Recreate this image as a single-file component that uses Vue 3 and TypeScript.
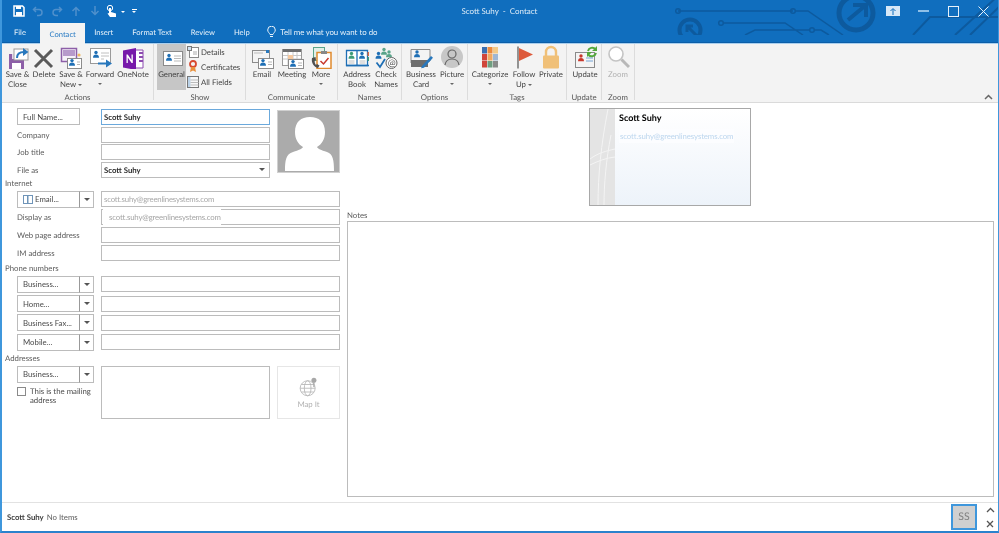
<script setup lang="ts">
interface RibbonBtn {
  lines: string[]
  width: number
  icon: string
  caret?: boolean
  disabled?: boolean
  active?: boolean
}

interface RibbonGroup {
  label: string
  width: number
  items: RibbonBtn[]
  list?: { label: string; icon: string }[]
}

// small reusable pieces for the ribbon icons
const person = (x: number, y: number, c = '#1f6fb5') =>
  `<circle cx="${x}" cy="${y}" r="1.7" fill="${c}"/><path d="M${x - 3} ${y + 5.2}c0-2.4 1.2-3.3 3-3.3s3 .9 3 3.3z" fill="${c}"/>`

const card = (x: number, y: number, w: number, h: number) =>
  `<rect x="${x + .5}" y="${y + .5}" width="${w}" height="${h}" fill="#fff" stroke="#8c8c8c"/>` +
  person(x + 5, y + 2.6) +
  `<path d="M${x + 10} ${y + 4}h${w - 11}M${x + 10} ${y + 6.5}h${w - 11}" stroke="#b5b5b5"/>`

const icons: Record<string, string> = {
  saveClose: `<rect x="3" y="9" width="15" height="15" fill="#8d5fa8"/><rect x="6" y="9" width="9" height="5" fill="#e4d8ec"/><rect x="6" y="18" width="9" height="6" fill="#fff"/><rect x="8" y="4" width="14" height="11" fill="#fff" stroke="#9c9c9c"/><path d="M11 13c0-4 3-6 7-6" fill="none" stroke="#2878bd" stroke-width="2"/><path d="M17 3l5.500 4-5.500 4z" fill="#2878bd"/>`,
  delete: `<path d="M3 5 20 22M20 5 3 22" stroke="#5a5a5a" stroke-width="3" fill="none"/>`,
  saveNew: `<rect x="2.500" y="3.500" width="15" height="13" fill="#f6f1f9" stroke="#8d5fa8" stroke-width="1.500"/><rect x="4" y="5" width="12" height="6" fill="#b79acb"/>${card(8, 13, 14, 10)}<circle cx="20" cy="10" r="1.600" fill="#f0b860"/>`,
  forward: `<rect x="2.500" y="3.500" width="20" height="15" fill="#fff" stroke="#9a9a9a"/>${person(8, 7.5)}<path d="M13 8h8M13 11h8M13 14h3" stroke="#c0c0c0"/><path d="M10 18.500h10" stroke="#2878bd" stroke-width="2"/><path d="M18 14.500l6 4-6 4z" fill="#2878bd"/>`,
  onenote: `<path d="M10 5h12v18H10z" fill="#fff" stroke="#8c4ab0"/><path d="M18 8h4M18 12h4M18 16h4" stroke="#8c4ab0" stroke-width="2"/><path d="M2 5.500 15 3v22L2 22.500z" fill="#7719aa"/><path d="M5.500 18V9.500h1.200L10.500 15V9.500h1.300V18h-1.200L6.800 12.500V18z" fill="#fff"/>`,
  general: `<rect x="3.500" y="6.500" width="19" height="14" fill="#fff" stroke="#8a8a8a"/>${person(9, 10.5)}<path d="M14 11h7M14 13.500h7M14 16h7" stroke="#bbb"/>`,
  email: `<rect x="2.500" y="5.500" width="17" height="12" fill="#f4f4f4" stroke="#8c8c8c"/><path d="M4 8h9" stroke="#bbb"/><rect x="16" y="5" width="3" height="3" fill="#2878bd"/>${card(8, 13, 15, 10)}`,
  meeting: `<rect x="2.500" y="4.500" width="19" height="16" fill="#fff" stroke="#9a9a9a"/><rect x="3" y="4" width="18" height="3" fill="#6e6e6e"/><path d="M3 10.500h18M3 14h18M8 7v13M13 7v13M17 7v13" stroke="#c8c8c8"/><rect x="8" y="10" width="5" height="4" fill="#f5c9a0"/>${card(8, 14, 15, 9)}`,
  more: `<rect x="4.500" y="2.500" width="11" height="13" fill="#e2efe8" stroke="#5aa48a"/><rect x="8" y="7.500" width="14" height="16" fill="#fff" stroke="#e08a2e" stroke-width="1.500"/><rect x="12" y="6" width="6" height="3" fill="#888"/><path d="M11.500 16l3 3 5-6" fill="none" stroke="#c8382c" stroke-width="1.500"/><path d="M3 13c-1 5 2 9 6 10l1.500-2.500-2.500-1.500-1 1c-1-1-1.500-3-1.300-4.500l1.300-.3L6.500 12z" fill="#505050"/>`,
  book: `<path d="M1.500 5.500h10.500v15H1.500zM12 5.500h10.500v15H12z" fill="#fff" stroke="#1f6fb5" stroke-width="1.300"/><path d="M1 20.500h23" stroke="#1f6fb5" stroke-width="1.500"/>${person(6.5, 8.5, '#3f9c78')}${person(17, 8.5, '#1f6fb5')}<path d="M3.500 16h6M14.500 16h6M3.500 18h6M14.500 18h6" stroke="#c0c0c0"/><rect x="22.500" y="7" width="1.500" height="4" fill="#d86a4a"/><rect x="22.500" y="12" width="1.500" height="4" fill="#3f9c78"/>`,
  names: `${person(10, 4.5, '#5aa48a')}${person(4.5, 8.5, '#1f6fb5')}${person(15, 7, '#5aa48a')}<path d="M2.500 17.500l3.500 4.500 5-8" fill="none" stroke="#1f6fb5" stroke-width="1.800"/><circle cx="17.500" cy="18" r="5.500" fill="#fff" stroke="#666"/><text x="13.800" y="21" font-size="9.500" font-family="Lato" fill="#555">@</text>`,
  bizcard: `<path d="M2 18V4.500h19V16z" fill="#f4f4f4" stroke="#8a8a8a"/>${person(8, 7, '#1f6fb5')}<path d="M2 15h17v7H2z" fill="#6e6e6e"/><path d="M13 21l9-10 2 1.700-9 10-3 .6z" fill="#2878bd"/>`,
  picture: `<circle cx="12" cy="12" r="11" fill="#c7c7c7"/><circle cx="12" cy="9" r="4" fill="none" stroke="#666" stroke-width="1.200"/><path d="M5 20c.6-4 3-6 7-6s6.400 2 7 6" fill="none" stroke="#666" stroke-width="1.200"/>`,
  categorize: `<rect x="4" y="2" width="5" height="6.500" fill="#3a6fb0"/><rect x="9.500" y="2" width="5" height="6.500" fill="#ec8a3c"/><rect x="15" y="2" width="5" height="6.500" fill="#f3c987"/><rect x="4" y="9" width="5" height="6.500" fill="#d0453a"/><rect x="9.500" y="9" width="5" height="6.500" fill="#f0a860"/><rect x="15" y="9" width="5" height="6.500" fill="#9fb7d4"/><rect x="4" y="16" width="5" height="6.500" fill="#d0453a"/><rect x="9.500" y="16" width="5" height="6.500" fill="#6f9e80"/><rect x="15" y="16" width="5" height="6.500" fill="#8a8a8a"/>`,
  flag: `<path d="M6 1.500v22" stroke="#7a7a7a" stroke-width="1.600"/><path d="M7 3l14 6.500L7 16z" fill="#dd5a3c"/>`,
  lock: `<path d="M7 11V7a5 5 0 0 1 10 0v4" fill="none" stroke="#f0c078" stroke-width="2.400"/><rect x="4" y="10.500" width="16" height="13" rx="1" fill="#f0c078"/>`,
  update: `<rect x="2.500" y="7.500" width="19" height="15" fill="#f4f4f4" stroke="#8a8a8a"/>${person(8, 11, '#c8382c')}<path d="M13 13h7M13 16h7" stroke="#9fbfdf" stroke-width="1.500"/><path d="M15 6a4.500 4.500 0 0 1 7.500-2M23 8a4.500 4.500 0 0 1-7.500 2" fill="none" stroke="#54a83c" stroke-width="2"/><path d="M24 1v5h-5zM14 12V7h5z" fill="#54a83c"/>`,
  zoom: `<circle cx="10" cy="9" r="7" fill="#fff" stroke="#c4c4c4" stroke-width="1.600"/><path d="M15.500 14.500 23 22" stroke="#b8b8b8" stroke-width="3"/>`,
}

const groups: RibbonGroup[] = [
  {
    label: 'Actions', width: 152, items: [
      { lines: ['Save &', 'Close'], width: 27, icon: 'saveClose' },
      { lines: ['Delete'], width: 26, icon: 'delete' },
      { lines: ['Save &', 'New'], width: 28, icon: 'saveNew', caret: true },
      { lines: ['Forward'], width: 30, icon: 'forward', caret: true },
      { lines: ['OneNote'], width: 36, icon: 'onenote' },
    ],
  },
  {
    label: 'Show', width: 92, items: [{ lines: ['General'], width: 29, icon: 'general', active: true }],
    list: [
      { label: 'Details', icon: 'details' },
      { label: 'Certificates', icon: 'cert' },
      { label: 'All Fields', icon: 'fields' },
    ],
  },
  {
    label: 'Communicate', width: 92, items: [
      { lines: ['Email'], width: 28, icon: 'email' },
      { lines: ['Meeting'], width: 32, icon: 'meeting' },
      { lines: ['More'], width: 26, icon: 'more', caret: true },
    ],
  },
  {
    label: 'Names', width: 64, items: [
      { lines: ['Address', 'Book'], width: 34, icon: 'book' },
      { lines: ['Check', 'Names'], width: 24, icon: 'names' },
    ],
  },
  {
    label: 'Options', width: 66, items: [
      { lines: ['Business', 'Card'], width: 34, icon: 'bizcard' },
      { lines: ['Picture'], width: 28, icon: 'picture', caret: true },
    ],
  },
  {
    label: 'Tags', width: 99, items: [
      { lines: ['Categorize'], width: 40, icon: 'categorize', caret: true },
      { lines: ['Follow', 'Up'], width: 28, icon: 'flag', caret: true },
      { lines: ['Private'], width: 26, icon: 'lock' },
    ],
  },
  { label: 'Update', width: 35, items: [{ lines: ['Update'], width: 32, icon: 'update' }] },
  { label: 'Zoom', width: 33, items: [{ lines: ['Zoom'], width: 28, icon: 'zoom', disabled: true }] },
]

const tabs = ['File', 'Contact', 'Insert', 'Format Text', 'Review', 'Help']
const topRows = ['Company', 'Job title']
const webRows = ['Web page address', 'IM address']
const phones = ['Business...', 'Home...', 'Business Fax...', 'Mobile...']
const email = 'scott.suhy@greenlinesystems.com'
</script>

<template>
  <div class="win">
    <div class="head">
      <svg class="circuit" width="324" height="35" viewBox="675 0 324 35" fill="none" stroke="#0d5a9e">
        <path d="M678 11h115M796 11h12l35 24" stroke-width="1.500" />
        <circle cx="678" cy="11" r="2.300" stroke-width="1.500" />
        <circle cx="793" cy="11" r="2.300" stroke-width="1.500" />
        <path d="M724 23h61l18 12M745 35l10-5h55M815 30h6l8 5" stroke-width="1.500" />
        <circle cx="721" cy="23" r="2.300" stroke-width="1.500" />
        <circle cx="812" cy="30" r="2.300" stroke-width="1.500" />
        <circle cx="690" cy="30" r="10.500" stroke-width="4" />
        <path d="M693 26h-6v6M687 26l10 10" stroke-width="3" />
        <circle cx="856" cy="13" r="17" stroke-width="5" />
        <path d="M853 5h13v12M866 5l-18 15" stroke-width="4" />
        <path d="M913 35l17-18h69M955 35l44-40M970 35l29-28" stroke-width="2" />
      </svg>
      <header class="titlebar">
        <div class="qat">
          <svg class="qat-i" width="12" height="12" viewBox="0 0 12 12"><path d="M1 1h8.500L11 2.500V11H1z" fill="none" stroke="#fff" stroke-width="1.500" /><path d="M3 1h5v3H3zM3 7h6v4H3z" fill="#fff" /></svg>
          <svg class="qat-i" width="12" height="12" viewBox="0 0 12 12" fill="none" stroke="#4f90cc" stroke-width="1.500"><path d="M4 2 1.500 4.500 4 7M2 4.500h5a3 3 0 0 1 0 6H5" /></svg>
          <svg class="qat-i" width="12" height="12" viewBox="0 0 12 12" fill="none" stroke="#4f90cc" stroke-width="1.500"><path d="M8 2l2.500 2.500L8 7M10 4.500H5a3 3 0 0 0 0 6h2" /></svg>
          <svg class="qat-i" width="12" height="12" viewBox="0 0 12 12" fill="none" stroke="#4f90cc" stroke-width="1.500"><path d="M2.500 6 6 2.500 9.500 6M6 3v8" /></svg>
          <svg class="qat-i" width="12" height="12" viewBox="0 0 12 12" fill="none" stroke="#4f90cc" stroke-width="1.500"><path d="M2.500 6 6 9.500 9.500 6M6 9V1" /></svg>
          <svg class="qat-i hand" width="12" height="13" viewBox="0 0 12 13"><circle cx="4" cy="3" r="2.700" fill="none" stroke="#fff" /><path d="M3 3h2v4l5 1.500V12H4L1.500 8.500 3 8z" fill="#fff" /></svg>
          <span class="qat-caret"></span>
          <span class="qat-more"></span>
        </div>
        <div class="wintitle">Scott Suhy&nbsp; -&nbsp; Contact</div>
        <div class="controls">
          <span class="ctl"><svg width="14" height="10" viewBox="0 0 14 10"><rect width="14" height="10" fill="#d7e8f7" /><path d="M7 9V3M4.500 5 7 2.500 9.500 5" stroke="#106ebe" fill="none" /></svg></span>
          <span class="ctl"><svg width="11" height="2" viewBox="0 0 11 2"><rect width="11" height="2" fill="#8fc0e8" /></svg></span>
          <span class="ctl"><svg width="11" height="11" viewBox="0 0 11 11"><rect x=".5" y=".5" width="10" height="10" fill="none" stroke="#e6f1fa" /></svg></span>
          <span class="ctl"><svg width="11" height="11" viewBox="0 0 11 11"><path d="M.5.500l10 10M10.500.500l-10 10" stroke="#e6f1fa" /></svg></span>
        </div>
      </header>

      <nav class="tabs">
        <span v-for="t in tabs" :key="t" class="tab" :class="{ on: t === 'Contact' }">{{ t }}</span>
        <span class="tell">
          <svg width="9" height="12" viewBox="0 0 9 12" fill="none" stroke="#e6f1fa"><path d="M3 8.500C2.500 7 .7 6 .7 4a3.800 3.800 0 0 1 7.600 0c0 2-1.800 3-2.300 4.500zM3 10.500h3" /></svg>
          Tell me what you want to do
        </span>
      </nav>
    </div>

    <section class="ribbon">
      <div v-for="g in groups" :key="g.label" class="group" :style="{ width: g.width + 'px' }">
        <div class="group-main">
          <div
            v-for="b in g.items"
            :key="b.icon"
            class="big"
            :class="{ active: b.active, off: b.disabled }"
            :style="{ width: b.width + 'px' }"
          >
            <svg class="big-icon" width="24" height="24" viewBox="0 0 24 24" v-html="icons[b.icon]"></svg>
            <span v-for="l in b.lines" :key="l" class="big-line">{{ l }}<i v-if="b.caret && b.lines.length > 1 && l === b.lines[1]" class="mini"></i></span>
            <i v-if="b.caret && b.lines.length === 1" class="mini alone"></i>
          </div>
          <ul v-if="g.list" class="show-list">
            <li>
              <svg width="12" height="12" viewBox="0 0 12 12"><rect x="2.500" y="1.500" width="9" height="10" fill="#fff" stroke="#888" /><rect x=".5" y=".5" width="4" height="4" fill="#cfe0f0" stroke="#777" /><path d="M6 6h4M6 8h4" stroke="#aaa" /></svg>
              Details
            </li>
            <li>
              <svg width="12" height="13" viewBox="0 0 12 13"><circle cx="6" cy="4" r="3" fill="none" stroke="#d8492f" stroke-width="1.800" /><path d="M4 7l-1 5 3-1.500L9 12 8 7" fill="#e8903c" /></svg>
              Certificates
            </li>
            <li>
              <svg width="12" height="12" viewBox="0 0 12 12"><rect x=".5" y=".5" width="11" height="11" fill="#f8f8f8" stroke="#777" /><rect x="1" y="1" width="2.500" height="10" fill="#bcd3e8" /><path d="M3.500 4h8M3.500 6.500h8M3.500 9h8" stroke="#bbb" /></svg>
              All Fields
            </li>
          </ul>
        </div>
        <div class="group-label">{{ g.label }}</div>
      </div>
      <svg class="collapse" width="9" height="6" viewBox="0 0 9 6" fill="none" stroke="#666" stroke-width="1.500"><path d="M1 5l3.500-3.500L8 5" /></svg>
    </section>

    <main class="body">
      <div class="form">
        <div class="top">
          <div>
            <div class="row">
              <button class="btn full">Full Name...</button>
              <div class="input focus name">Scott Suhy</div>
            </div>
            <div v-for="r in topRows" :key="r" class="row">
              <label class="lab">{{ r }}</label>
              <div class="input"></div>
            </div>
            <div class="row">
              <label class="lab">File as</label>
              <div class="input name select">Scott Suhy<i class="arrow"></i></div>
            </div>
          </div>
          <div class="photo">
            <svg width="61" height="61" viewBox="0 0 61 61"><path d="M7 60c0-11 1-17 8-19 6-2 9-3 10-5-5-3-8-8-8-15C17 11 23 6 32 6s15 5 15 15c0 7-3 12-8 15 1 2 4 3 10 5 6 2 7 8 7 19z" fill="#fff" /></svg>
          </div>
        </div>

        <div class="sec inet-sec">Internet</div>
        <div class="row wide">
          <div class="split">
            <button class="btn s-main">
              <svg width="10" height="9" viewBox="0 0 10 9"><rect x=".5" y=".5" width="4" height="8" fill="#fff" stroke="#6f94b8" /><rect x="5" y=".5" width="4.500" height="8" fill="#fff" stroke="#6f94b8" /></svg>
              Email...
            </button>
            <button class="btn s-drop"><i class="arrow"></i></button>
          </div>
          <div class="input smear"><span class="blurred">{{ email }}</span></div>
        </div>
        <div class="row wide">
          <label class="lab">Display as</label>
          <div class="input"><span class="patch">{{ email }}</span></div>
        </div>
        <div v-for="r in webRows" :key="r" class="row wide">
          <label class="lab">{{ r }}</label>
          <div class="input"></div>
        </div>

        <div class="sec phone-sec">Phone numbers</div>
        <div v-for="p in phones" :key="p" class="row wide phone">
          <div class="split">
            <button class="btn s-main">{{ p }}</button>
            <button class="btn s-drop"><i class="arrow"></i></button>
          </div>
          <div class="input"></div>
        </div>

        <div class="sec addr-sec">Addresses</div>
        <div class="addr">
          <div>
            <div class="split">
              <button class="btn s-main">Business...</button>
              <button class="btn s-drop"><i class="arrow"></i></button>
            </div>
            <div class="mailing">
              <span class="check"></span>
              <span>This is the mailing<br />address</span>
            </div>
          </div>
          <div class="input addr-box"></div>
          <div class="map">
            <svg width="19" height="20" viewBox="0 0 22 24" fill="none" stroke="#b4b4b4">
              <circle cx="10" cy="13.500" r="9" />
              <ellipse cx="10" cy="13.500" rx="4" ry="9" />
              <path d="M1 13.500h18M2.500 9h15M2.500 18h15" />
              <circle cx="17.500" cy="4" r="3" fill="#a8a8a8" stroke="none" />
              <path d="M17.500 6v6" stroke="#a8a8a8" stroke-width="1.500" />
            </svg>
            <span>Map It</span>
          </div>
        </div>
      </div>

      <div class="pane">
        <div class="bizcard">
          <svg class="strip" width="25" height="96" viewBox="0 0 25 96" fill="none" stroke="#f4f4f4">
            <rect width="25" height="96" fill="#e4e4e4" stroke="none" />
            <path d="M0 50C8 44 16 42 25 40M0 56c8-4 16-7 25-8M8 96c0-30 3-60 10-96M14 96c0-20 2-45 7-70" />
          </svg>
          <div class="card-text">
            <div class="card-name">Scott Suhy</div>
            <div class="card-mail">{{ email }}</div>
          </div>
        </div>
        <div class="notes-lab">Notes</div>
        <div class="notes"></div>
      </div>
    </main>

    <footer class="foot">
      <span class="who">Scott Suhy</span>
      <span class="items">No Items</span>
      <span class="avatar">SS</span>
      <span class="nav">
        <svg width="9" height="6" viewBox="0 0 9 6" fill="none" stroke="#555" stroke-width="1.300"><path d="M1 5l3.500-3.500L8 5" /></svg>
        <svg width="8" height="8" viewBox="0 0 8 8" fill="none" stroke="#555" stroke-width="1.300"><path d="M1 1l6 6M7 1 1 7" /></svg>
      </span>
    </footer>
  </div>
</template>

<style>
html, body { margin: 0; background: #fff; }
</style>

<style scoped>
.win {
  width: 999px;
  height: 533px;
  box-sizing: border-box;
  display: flex;
  flex-direction: column;
  position: relative;
  overflow: hidden;
  border-left: 2px solid #3f97dc;
  border-right: 1px solid #3f97dc;
  border-bottom: 2px solid #2b82cc;
  background: #fff;
  font: 7.800px Lato, sans-serif;
  text-rendering: geometricPrecision;
  color: #4a4a4a;
  filter: blur(.3px);
}

.head {
  margin: 0 -1px 0 -2px;
  background: #106ebe;
  position: relative;
  z-index: 1;
  flex: none;
}
.circuit { position: absolute; left: 675px; top: 0; }
.titlebar {
  height: 22px;
  display: grid;
  grid-template-columns: 1fr auto 1fr;
  align-items: center;
  position: relative;
}
.qat { display: flex; align-items: center; padding-left: 13px; }
.qat-i { margin-right: 7px; }
.hand { margin-left: -2px; margin-right: 3px; }
.qat-caret { width: 0; height: 0; border: 2.500px solid transparent; border-top-color: #fff; margin: 3px 7px 0 0; }
.qat-more { width: 5px; height: 4px; border-top: 1px solid #fff; position: relative; }
.qat-more::after { content: ""; position: absolute; left: 0; top: 1px; border: 2.500px solid transparent; border-top-color: #fff; }
.wintitle { color: #dcebf7; font-size: 8px; }
.controls { display: flex; justify-content: flex-end; padding-right: 1px; }
.ctl { width: 30px; height: 22px; display: flex; align-items: center; justify-content: center; }

.tabs {
  height: 21px;
  box-sizing: border-box;
  border-bottom: 1px solid #0b5ea8;
  display: flex;
  color: #e6f1fa;
  font-size: 7.600px;
  position: relative;
  padding-left: 1px;
}
.tab { padding: 0 9.500px; height: 20px; display: flex; align-items: center; }
.tab:first-child { padding: 0 14.500px 0 13px; }
.tab.on { background: #f3f3f3; color: #2b7cc4; padding: 0 9px; height: 21px; margin-top: 1px; position: relative; z-index: 1; }
.tell { margin-left: 8px; display: flex; align-items: center; gap: 4px; height: 20px; font-size: 7.900px; }

.ribbon {
  height: 60px;
  box-sizing: border-box;
  flex: none;
  background: #f3f3f3;
  border-bottom: 1px solid #dadada;
  border-top: 1px solid #a9cfee;
  display: flex;
  position: relative;
}
.group {
  box-sizing: border-box;
  height: 56px;
  border-right: 1px solid #dcdcdc;
  display: flex;
  flex-direction: column;
  padding-left: 2px;
}
.group:nth-child(2) { padding-left: 3px; }
.group-main { height: 46px; display: flex; }
.group-label { height: 8px; margin-top: 2px; line-height: 10px; text-align: center; color: #555; margin-left: -2px; }
.big {
  display: flex;
  flex-direction: column;
  align-items: center;
  flex: none;
  color: #3f3f3f;
  line-height: 10px;
  white-space: nowrap;
}
.big-icon { height: 24px; margin-top: 1px; flex: none; }
.big-line { display: block; }
.big.active { background: #c6c6c6; }
.big.off { color: #b0b0b0; }
.mini { display: inline-block; width: 0; height: 0; border: 2px solid transparent; border-top-color: #666; margin-left: 2px; vertical-align: -1px; }
.mini.alone { margin: 4px 0 0; }
.show-list { list-style: none; margin: 0; padding: 0 0 0 1px; color: #3f3f3f; }
.show-list li { height: 15px; display: flex; align-items: center; gap: 2px; white-space: nowrap; }
.collapse { position: absolute; right: 5px; bottom: 2px; }

.body { flex: 1; display: flex; min-height: 0; }
.form { width: 338px; padding: 5px 0 0 3px; box-sizing: border-box; flex: none; }
.top { display: grid; grid-template-columns: 253px 63px; gap: 7px; margin-left: 12px; }
.row { display: grid; grid-template-columns: 84px 1fr; align-items: center; height: 17.700px; }
.row.wide { margin-left: 12px; height: 18px; }
.row.phone { height: 19.300px; }
.input {
  height: 16px;
  box-sizing: border-box;
  border: 1px solid #bcbcbc;
  background: #fff;
  position: relative;
  display: flex;
  align-items: center;
  padding-left: 2px;
}
.input.focus { border-color: #6ba9dc; }
.name { color: #2e2e2e; font-weight: 700; }
.select { justify-content: space-between; padding-right: 4px; }
.lab { color: #5a5a5a; }
.btn {
  font: inherit;
  color: #4a4a4a;
  background: #fff;
  border: 1px solid #bcbcbc;
  box-sizing: border-box;
  padding: 0 0 0 5px;
  text-align: left;
  height: 17px;
  display: flex;
  align-items: center;
  gap: 2px;
}
.full { width: 63px; }
.split { display: flex; width: 77px; }
.s-main { width: 63px; }
.s-drop { width: 15px; border-left: 1px solid #999; margin-left: -1px; padding: 0; justify-content: center; }
.arrow { width: 0; height: 0; border: 3px solid transparent; border-top: 3.500px solid #555; border-bottom: 0; }
.photo {
  height: 63px;
  margin-top: 2px;
  box-sizing: border-box;
  border: 1px solid #d0d0d0;
  background: #ababab;
  display: flex;
  overflow: hidden;
}
.sec { color: #5a5a5a; height: 11px; line-height: 11px; }
.inet-sec { margin: -.5px 0 1.200px; }
.phone-sec { margin: 1px 0 .3px; }
.addr-sec { margin: 1.500px 0 1.500px; }
.blurred { color: #a8a8a8; filter: blur(.6px); white-space: nowrap; letter-spacing: -.2px; }
.patch {
  position: absolute;
  left: 1px;
  top: -2px;
  height: 18px;
  width: 118px;
  background: #fff;
  color: #a4a4a4;
  padding-left: 6px;
  box-sizing: border-box;
  display: flex;
  align-items: center;
  white-space: nowrap;
  letter-spacing: -.15px;
}
.addr { display: grid; grid-template-columns: 84px 169px 63px; margin-left: 12px; }
.map {
  margin-left: 7px;
  width: 63px;
  height: 53px;
  box-sizing: border-box;
  border: 1px solid #e6e6e6;
  display: flex;
  flex-direction: column;
  align-items: center;
  padding-top: 10px;
  gap: 2px;
  color: #b0b0b0;
}
.addr-box { height: 53px; }
.mailing { display: flex; gap: 4px; margin-top: 4px; line-height: 9px; color: #4a4a4a; white-space: nowrap; }
.check { width: 9px; height: 9px; flex: none; box-sizing: border-box; border: 1px solid #8a8a8a; background: #fff; }

.pane { flex: 1; display: flex; flex-direction: column; padding: 5px 4px 0 7px; min-width: 0; }
.bizcard {
  width: 162px;
  height: 98px;
  flex: none;
  align-self: center;
  margin-right: 1px;
  box-sizing: border-box;
  border: 1px solid #a8a8a8;
  display: flex;
  background: linear-gradient(#fff, #edf3fa);
}
.strip { flex: none; }
.card-text { padding: 3px 0 0 4px; min-width: 0; }
.card-name { color: #000; font-weight: 700; font-size: 9px; line-height: 12px; }
.card-mail { color: #bcd6ee; margin-top: 5px; white-space: nowrap; letter-spacing: -.1px; padding: 2px 1px; background: #fcfdff; filter: blur(.3px); }
.notes-lab { color: #5a5a5a; margin-top: 3px; height: 12px; line-height: 12px; }
.notes { height: 276px; box-sizing: border-box; border: 1px solid #bcbcbc; }

.foot {
  height: 29px;
  flex: none;
  box-sizing: border-box;
  border-top: 1px solid #e2e2e2;
  display: flex;
  align-items: center;
  padding: 0 1px 0 5px;
  gap: 3px;
}
.who { font-weight: 700; color: #3f3f3f; }
.items { color: #5a5a5a; flex: 1; }
.avatar {
  width: 26px;
  height: 26px;
  box-sizing: border-box;
  border: 2px solid #3f97dc;
  background: #d0d0d0;
  color: #7f7f7f;
  font-size: 10.500px;
  display: flex;
  align-items: center;
  justify-content: center;
}
.nav { width: 14px; margin-left: 3px; display: flex; flex-direction: column; align-items: center; gap: 7px; }
</style>
